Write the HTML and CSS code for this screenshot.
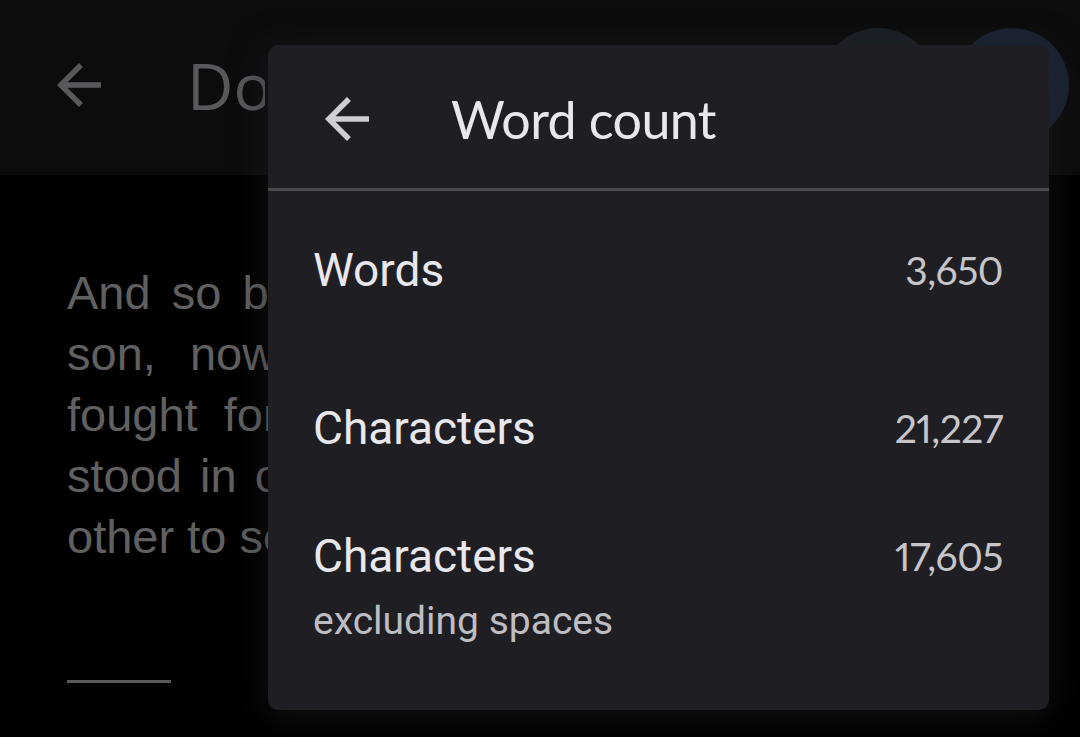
FILE: index.html
```html
<!DOCTYPE html>
<html lang="en">
<head>
    <meta charset="UTF-8">
    <meta name="viewport" content="width=device-width, initial-scale=1.0">
    <title>Word count</title>
    <link rel="stylesheet" href="styles.css">
</head>
<body>
    <header class="app-bar">
        <svg class="icon app-back" viewBox="0 0 24 24"><path d="M20 11H7.83l5.59-5.59L12 4l-8 8 8 8 1.41-1.41L7.83 13H20v-2z"/></svg>
        <div class="doc-title">Docs</div>
        <div class="avatars">
            <span class="avatar"></span>
            <span class="avatar avatar-blue"></span>
        </div>
    </header>

    <main class="doc">
        <div class="line line-1">And so by</div>
        <div class="line line-2">son, now</div>
        <div class="line line-3">fought for</div>
        <div class="line line-4">stood in one</div>
        <div class="line">other to see</div>
        <div class="rule"></div>
    </main>

    <div class="dialog">
        <div class="dialog-header">
            <svg class="icon dialog-back" viewBox="0 0 24 24"><path d="M20 11H7.83l5.59-5.59L12 4l-8 8 8 8 1.41-1.41L7.83 13H20v-2z"/></svg>
            <h2>Word count</h2>
        </div>
        <div class="dialog-body">
            <div class="stat stat-words">
                <div class="stat-label">Words</div>
                <div class="stat-value">3,650</div>
            </div>
            <div class="stat">
                <div class="stat-label">Characters</div>
                <div class="stat-value">21,227</div>
            </div>
            <div class="stat">
                <div>
                    <div class="stat-label">Characters</div>
                    <div class="stat-sub">excluding spaces</div>
                </div>
                <div class="stat-value">17,605</div>
            </div>
        </div>
    </div>
</body>
</html>
```

FILE: styles.css
```css
* {
    margin: 0;
    padding: 0;
    box-sizing: border-box;
}

body {
    width: 1080px;
    height: 737px;
    background-color: #000;
    overflow: hidden;
    position: relative;
    font-family: Roboto, 'Noto Sans', sans-serif;
}

.icon {
    width: 66px;
    height: 66px;
    flex: none;
}

/* top toolbar behind the dialog */
.app-bar {
    height: 175px;
    background-color: #0c0c0d;
    display: flex;
    align-items: center;
    padding: 0 11px 5px 46px;
}

.app-back {
    fill: #59595c;
}

.doc-title {
    width: 78px;
    margin-left: 75px;
    overflow: hidden;
    font-family: 'Open Sans', sans-serif;
    font-size: 64px;
    color: #59595c;
    white-space: nowrap;
}

.avatars {
    margin-left: auto;
    display: flex;
    gap: 20px;
}

.avatar {
    width: 114px;
    height: 114px;
    border-radius: 50%;
    background-color: #1c1f25;
}

.avatar-blue {
    background-color: #1a2232;
}

/* document text, cut off by the dialog */
.doc {
    width: 268px;
    overflow: hidden;
    padding: 87px 0 0 67px;
    font-family: 'Liberation Sans', Arial, sans-serif;
    font-size: 47px;
    line-height: 61px;
    color: #606060;
}

.line {
    white-space: nowrap;
}

.line-1 { word-spacing: 8px; }
.line-2 { word-spacing: 21px; }
.line-3 { word-spacing: 13px; }
.line-4 { word-spacing: 5px; }

.rule {
    width: 104px;
    height: 3px;
    margin-top: 113px;
    background-color: #5c5c5c;
}

/* word count dialog */
.dialog {
    position: absolute;
    left: 268px;
    top: 45px;
    width: 781px;
    height: 665px;
    background-color: #1f1f23;
    border-radius: 10px;
    box-shadow: 0 6px 36px rgba(34, 34, 38, 0.55);
}

.dialog-header {
    height: 146px;
    display: flex;
    align-items: center;
    padding: 7px 0 3px 46px;
    border-bottom: 3px solid #4a4a4d;
}

.dialog-back {
    fill: #cfcfd3;
}

.dialog-header h2 {
    margin-left: 71px;
    font-family: Lato, sans-serif;
    font-weight: 400;
    font-size: 52px;
    letter-spacing: -0.6px;
    color: #e8e8ec;
}

.dialog-body {
    padding: 52px 46px 0 45px;
}

.stat {
    display: flex;
    justify-content: space-between;
    align-items: flex-start;
    margin-bottom: 74px;
}

.stat-words {
    margin-bottom: 104px;
}

.stat-label {
    font-size: 46px;
    line-height: 54px;
    color: #e8e8ec;
}

.stat-value {
    font-family: Lato, sans-serif;
    font-size: 39px;
    line-height: 54px;
    letter-spacing: -0.5px;
    font-variant-numeric: proportional-nums;
    color: #c6c6ca;
}

.stat-sub {
    margin-top: 16px;
    font-size: 39px;
    line-height: 44px;
    color: #bdbdc2;
}
```
